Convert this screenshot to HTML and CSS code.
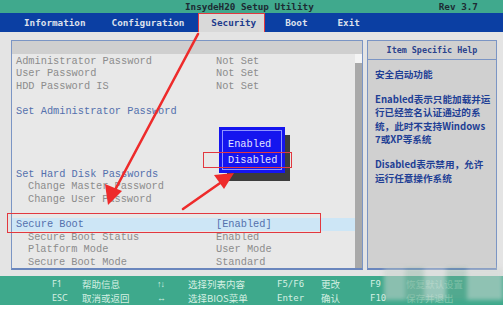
FILE: index.html
```html
<!DOCTYPE html>
<html>
<head>
<meta charset="utf-8">
<link rel="stylesheet" href="styles.css">
</head>
<body>
<div class="screen">
  <header class="title">
    <span class="title-name">InsydeH20 Setup Utility</span>
    <span class="title-rev">Rev 3.7</span>
  </header>
  <nav class="menu">
    <span class="tab tab-info">Information</span>
    <span class="tab tab-conf">Configuration</span>
    <span class="tab tab-sec">Security</span>
    <span class="tab tab-boot">Boot</span>
    <span class="tab tab-exit">Exit</span>
  </nav>
  <main class="main">
    <section class="panel">
      <div class="panel-head"></div>
      <div class="panel-body">
        <ul class="rows">
          <li class="row dim"><span class="lab">Administrator Password</span><span class="val">Not Set</span></li>
          <li class="row dim"><span class="lab">User Password</span><span class="val">Not Set</span></li>
          <li class="row dim"><span class="lab">HDD Password IS</span><span class="val">Not Set</span></li>
          <li class="row"></li>
          <li class="row sel"><span class="lab">Set Administrator Password</span></li>
          <li class="row"></li>
          <li class="row"></li>
          <li class="row"></li>
          <li class="row"></li>
          <li class="row sel"><span class="lab">Set Hard Disk Passwords</span></li>
          <li class="row dim sub"><span class="lab">Change Master Password</span></li>
          <li class="row dim sub"><span class="lab">Change User Password</span></li>
          <li class="row"></li>
          <li class="row sel active"><span class="lab">Secure Boot</span><span class="val">[Enabled]</span></li>
          <li class="row dim sub"><span class="lab">Secure Boot Status</span><span class="val">Enabled</span></li>
          <li class="row dim sub"><span class="lab">Platform Mode</span><span class="val">User Mode</span></li>
          <li class="row dim sub"><span class="lab">Secure Boot Mode</span><span class="val">Standard</span></li>
        </ul>
        <div class="scrollbar"><div class="scroll-top"></div><div class="scroll-thumb"></div></div>
      </div>
    </section>
    <aside class="help">
      <div class="help-head">Item Specific Help</div>
      <div class="help-body">
        <p>安全启动功能</p>
        <p>Enabled表示只能加载并运行已经签名认证通过的系统，此时不支持Windows 7或XP等系统</p>
        <p>Disabled表示禁用，允许运行任意操作系统</p>
      </div>
    </aside>
  </main>
  <footer class="foot">
    <span class="k">F1</span><span class="d">帮助信息</span><span class="k arrows">↑↓</span><span class="d">选择列表内容</span><span class="k mono">F5/F6</span><span class="d">更改</span><span class="k mono">F9</span><span class="d faint">恢复默认设置</span>
    <span class="k">ESC</span><span class="d">取消或返回</span><span class="k arrows">↔</span><span class="d">选择BIOS菜单</span><span class="k mono">Enter</span><span class="d">确认</span><span class="k mono">F10</span><span class="d faint">保存并退出</span>
  </footer>

  <div class="mosaic"></div>

  <div class="popup">
    <div class="popup-shadow"></div>
    <div class="popup-box">
      <div class="popup-item">Enabled</div>
      <div class="popup-item">Disabled</div>
    </div>
  </div>

  <div class="mark mark-row"></div>
  <div class="mark mark-opt"></div>

  <svg class="arrows-layer" width="503" height="312" viewBox="0 0 503 312">
    <line x1="198" y1="34" x2="115" y2="190" stroke="#ee2b2b" stroke-width="2.6" stroke-linecap="round"/>
    <polygon points="108,205 105,184 122,191" fill="#ee2b2b"/>
    <line x1="183" y1="209" x2="223" y2="181" stroke="#ee2b2b" stroke-width="2.6" stroke-linecap="round"/>
    <polygon points="234,173 214,175 224,189" fill="#ee2b2b"/>
  </svg>
</div>
</body>
</html>
```

FILE: styles.css
```css
* { box-sizing: border-box; margin: 0; padding: 0; }
html, body { width: 503px; height: 312px; overflow: hidden; background: #ffffff; }
body { font-family: "Liberation Mono", monospace; }

.screen {
  position: relative;
  width: 503px;
  height: 305px;
  display: flex;
  flex-direction: column;
  background: #dcdcdc;
}

.title {
  height: 13px;
  background: #40a98d;
  display: flex;
  align-items: center;
  font-family: "DejaVu Sans Mono", monospace;
  font-weight: bold;
  font-size: 9.3px;
  color: #1d2b33;
  padding-left: 185px;
}
.title-rev { margin-left: 125px; }

.menu {
  height: 19px;
  background: #0b3fa3;
  display: flex;
  align-items: center;
  font-family: "DejaVu Sans Mono", monospace;
  font-weight: bold;
  font-size: 9.3px;
  color: #dde1ec;
  padding-left: 24px;
}
.tab { line-height: 19px; }
.tab-conf { margin-left: 26px; }
.tab-sec {
  margin-left: 14px;
  padding: 0 9px 0 13px;
  background: #d9d9d9;
  color: #1e3c8c;
  height: 21px;
  line-height: 20px;
  margin-top: 2px;
  outline: 1.5px solid #e2383f;
  outline-offset: -1px;
}
.tab-boot { margin-left: 20px; }
.tab-exit { margin-left: 30px; }

.main {
  height: 244px;
  display: flex;
  padding: 8px 6px 6px 11px;
  gap: 4px;
  background: #e4e4e4;
}

.panel {
  width: 352px;
  border: 1px solid #7b95c4;
  border-bottom: 2px solid #6a86bd;
  display: flex;
  flex-direction: column;
  background: #e8e8e8;
  overflow: hidden;
}
.panel-head { height: 13px; background: #cfcfcf; flex: none; }
.panel-body { flex: 1; display: flex; overflow: hidden; }

.rows { list-style: none; flex: 1; padding-top: 0.5px; }
.row {
  height: 12.6px;
  line-height: 12.6px;
  font-size: 10.3px;
  display: flex;
  padding-left: 4px;
  white-space: nowrap;
}
.row .lab { width: 200px; }
.row.sub .lab { padding-left: 12px; }
.dim { color: #8c8c8c; }
.sel { color: #5470ad; }
.active { background: #cde6f6; }

.scrollbar {
  width: 7px;
  display: flex;
  flex-direction: column;
  background: #f0f0f0;
}
.scroll-top { height: 9px; background: #f4f4f4; }
.scroll-thumb { flex: 1; background: #a9a9a9; }

.help {
  flex: 1;
  border: 1px solid #7b95c4;
  border-bottom: 2px solid #6a86bd;
  background: #d0d0d0;
  display: flex;
  flex-direction: column;
}
.help-head {
  height: 19px;
  border-bottom: 1px solid #7b95c4;
  text-align: center;
  line-height: 19px;
  font-family: "DejaVu Sans Mono", monospace;
  font-weight: bold;
  font-size: 8.4px;
  color: #2a428c;
}
.help-body {
  padding: 8px 4px 0 7px;
  font-family: "Noto Sans CJK SC", sans-serif;
  font-weight: bold;
  font-size: 9.6px;
  line-height: 13.3px;
  color: #1f3f95;
}
.help-body p { margin-bottom: 11.9px; }

.foot {
  flex: 1;
  background: #3ea98c;
  display: grid;
  grid-template-columns: 30px 75px 31px 89px 44px 49px 36px 1fr;
  grid-auto-rows: 14px;
  align-content: start;
  padding-top: 1px;
  padding-left: 52px;
  font-family: "Noto Sans CJK SC", sans-serif;
  font-size: 9.5px;
  line-height: 14px;
  color: #d5f0e3;
}
.foot .k { font-family: "Noto Sans", sans-serif; font-size: 9px; }
.foot .k.mono { font-family: "DejaVu Sans Mono", monospace; font-size: 9px; }
.foot .arrows { font-size: 9px; letter-spacing: -1px; }
.foot .faint { color: #7fc9ae; }

.mosaic {
  position: absolute;
  left: 384px;
  top: 268px;
  width: 119px;
  height: 32px;
  background:
    linear-gradient(90deg, rgba(200,210,205,0.55) 0 18%, rgba(150,185,170,0.5) 18% 34%, rgba(215,220,218,0.6) 34% 52%, rgba(120,170,150,0.35) 52% 70%, rgba(210,215,212,0.55) 70% 100%);
  filter: blur(2px);
}

.popup { position: absolute; left: 219px; top: 127px; width: 72px; height: 55px; }
.popup-shadow {
  position: absolute;
  left: 8px; top: 8px;
  width: 63px; height: 46px;
  background: #3c3c3c;
}
.popup-box {
  position: absolute;
  left: 0; top: 0;
  width: 66px; height: 46px;
  background: #1515ef;
  border: 3px solid #1515ef;
  outline: 1px solid #8f94ff;
  outline-offset: -4px;
  padding: 7px 0 0 6px;
  font-size: 10.3px;
  line-height: 15.5px;
  color: #e4e4ff;
}

.mark {
  position: absolute;
  border: 1.5px solid #e2383f;
}
.mark-row { left: 7px; top: 213px; width: 314px; height: 20px; }
.mark-opt { left: 203px; top: 152px; width: 89px; height: 16px; }

.arrows-layer { position: absolute; left: 0; top: 0; pointer-events: none; }
```
